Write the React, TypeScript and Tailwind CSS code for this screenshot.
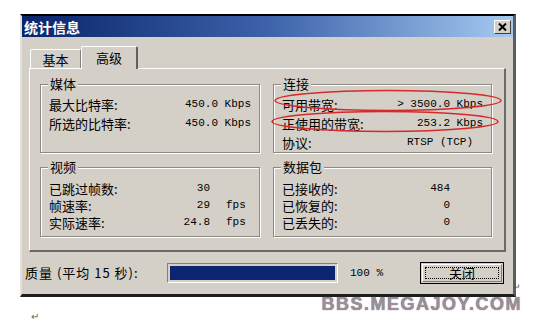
import React from "react";

const mono = "font-['Liberation_Mono',monospace] text-[11px]";

type Row = { label: string; value: string; unit?: string; shift?: boolean };

const media: Row[] = [
  { label: "最大比特率:", value: "450.0 Kbps" },
  { label: "所选的比特率:", value: "450.0 Kbps" },
];

const conn: Row[] = [
  { label: "可用带宽:", value: "> 3500.0 Kbps" },
  { label: "正使用的带宽:", value: "253.2 Kbps" },
  { label: "协议:", value: "RTSP (TCP)", shift: true },
];

const video: Row[] = [
  { label: "已跳过帧数:", value: "30", unit: "" },
  { label: "帧速率:", value: "29", unit: "fps" },
  { label: "实际速率:", value: "24.8", unit: "fps" },
];

const packets: Row[] = [
  { label: "已接收的:", value: "484" },
  { label: "已恢复的:", value: "0" },
  { label: "已丢失的:", value: "0" },
];

// etched group box, legend sits on the top border
const Group: React.FC<{ title: string; className: string; children: React.ReactNode }> = ({
  title,
  className,
  children,
}) => (
  <div
    className={`relative border border-[#8c8984] shadow-[inset_1px_1px_0_#fff,1px_1px_0_#fff] ${className}`}
  >
    <span className="absolute -top-[9px] left-[7px] bg-[#d4d0c8] px-[2px] text-[13px] leading-[16px]">
      {title}
    </span>
    {children}
  </div>
);

export default function App() {
  return (
    <div className="relative w-[540px] h-[323px] overflow-hidden bg-white text-black font-['Noto_Sans_CJK_SC',sans-serif]">
      <div className="flex items-end pt-[14px] pl-[20px]">
        {/* dialog window */}
        <div className="w-[496px] flex flex-col bg-[#d4d0c8] border-t-2 border-t-black border-l-2 border-l-[#e4e1da] border-r-[3px] border-r-[#5c5c5c] border-b-[3px] border-b-[#1e1e1e]">
          {/* title bar */}
          <div className="h-[21px] flex items-center justify-between pl-[2px] pr-[2px] bg-gradient-to-r from-[#0a246a] via-[#3d62aa] to-[#a6caf0]">
            <span className="text-white font-bold text-[14px] leading-[18px]">统计信息</span>
            <div className="w-[17px] h-[14px] flex items-center justify-center bg-[#d4d0c8] border-t border-l border-white border-r border-b border-r-[#404040] border-b-[#404040]">
              <svg width="9" height="8" viewBox="0 0 9 8">
                <path d="M1 0.5 L8 7.5 M8 0.5 L1 7.5" stroke="#000" strokeWidth="2" />
              </svg>
            </div>
          </div>

          {/* tabs */}
          <div className="relative z-10 flex items-end h-[31px] pl-[8px]">
            <div className="w-[51px] h-[19px] flex items-center justify-center border-t border-l border-white border-r border-r-[#808080] rounded-t-[2px] text-[13px] leading-[15px]">
              基本
            </div>
            <div className="w-[57px] h-[23px] -mb-[1px] flex items-start justify-center pt-[3px] bg-[#d4d0c8] border-t border-l border-white border-r-2 border-r-[#606060] rounded-t-[2px] text-[13px] leading-[15px]">
              高级
            </div>
          </div>

          {/* tab panel */}
          <div className="ml-[7px] w-[477px] h-[184px] border-t border-l border-white border-r-2 border-b-2 border-r-[#6a6a6a] border-b-[#6a6a6a] pt-[15px] pl-[10px] flex flex-col gap-[14px]">
            <div className="flex gap-[13px]">
              <Group title="媒体" className="w-[220px] h-[69px] pt-[10px] pl-[8px] pr-[8px]">
                {media.map((r) => (
                  <div key={r.label} className="h-[19px] flex items-center justify-between">
                    <span className="text-[13px] leading-[15px]">{r.label}</span>
                    <span className={mono}>{r.value}</span>
                  </div>
                ))}
              </Group>
              <Group title="连接" className="w-[219px] h-[69px] pt-[10px] pl-[8px] pr-[8px]">
                {conn.map((r) => (
                  <div key={r.label} className="h-[19px] flex items-center justify-between">
                    <span className="text-[13px] leading-[15px]">{r.label}</span>
                    <span className={`${mono} whitespace-pre ${r.shift ? "mr-[10px]" : ""}`}>
                      {r.value}
                    </span>
                  </div>
                ))}
              </Group>
            </div>
            <div className="flex gap-[13px]">
              <Group title="视频" className="w-[220px] h-[70px] pt-[12px] pl-[8px]">
                {video.map((r) => (
                  <div key={r.label} className="h-[17px] flex items-center">
                    <span className="w-[110px] text-[13px] leading-[15px]">{r.label}</span>
                    <span className={`${mono} leading-[13px] w-[51px] text-right`}>{r.value}</span>
                    <span className={`${mono} leading-[13px] ml-[16px]`}>{r.unit}</span>
                  </div>
                ))}
              </Group>
              <Group title="数据包" className="w-[219px] h-[70px] pt-[12px] pl-[8px]">
                {packets.map((r) => (
                  <div key={r.label} className="h-[17px] flex items-center">
                    <span className="w-[110px] text-[13px] leading-[15px]">{r.label}</span>
                    <span className={`${mono} leading-[13px] w-[58px] text-right`}>{r.value}</span>
                  </div>
                ))}
              </Group>
            </div>
          </div>

          {/* quality row */}
          <div className="h-[42px] flex items-center pl-[3px]">
            <span className="w-[142px] text-[13px] leading-[16px] tracking-[1px] whitespace-pre">质量 (平均 15 秒):</span>
            <div className="w-[171px] h-[20px] p-[2px] border border-t-[#808080] border-l-[#808080] border-r-white border-b-white">
              <div className="h-full w-full bg-[#0b2570]" />
            </div>
            <span className={`${mono} ml-[12px] w-[70px]`}>100 %</span>
            <div className="w-[84px] h-[22px] border border-black bg-[#d4d0c8] p-[1px]">
              <div className="h-full border-t border-l border-white border-r border-b border-r-[#808080] border-b-[#808080] p-[2px]">
                <div className="h-full flex items-center justify-center border border-dotted border-black text-[13px] leading-[14px]">
                  关闭
                </div>
              </div>
            </div>
          </div>
        </div>
        <span className="-ml-[3px] mb-[6px] text-[9px] leading-[9px] text-[#555]">↵</span>
      </div>

      {/* bottom line: paragraph mark and watermark */}
      <div className="flex items-start justify-between pl-[31px] pr-[18px]">
        <span className="mt-[14px] text-[10px] leading-[10px] text-[#666]">↵</span>
        <span className="-mt-[1px] font-['Liberation_Sans',sans-serif] font-bold text-[18px] leading-[17px] tracking-[1.5px] text-[#9d8e9c] [text-shadow:0_0_1px_#5e5260]">
          BBS.MEGAJOY.COM
        </span>
      </div>

      {/* red annotation ellipses */}
      <svg className="absolute left-0 top-0 pointer-events-none" width="540" height="323">
        <ellipse cx="388" cy="100.5" rx="113" ry="10" fill="none" stroke="#d62a2a" strokeWidth="1.5" />
        <ellipse cx="385" cy="121.5" rx="113" ry="10" fill="none" stroke="#d62a2a" strokeWidth="1.5" />
      </svg>
    </div>
  );
}
